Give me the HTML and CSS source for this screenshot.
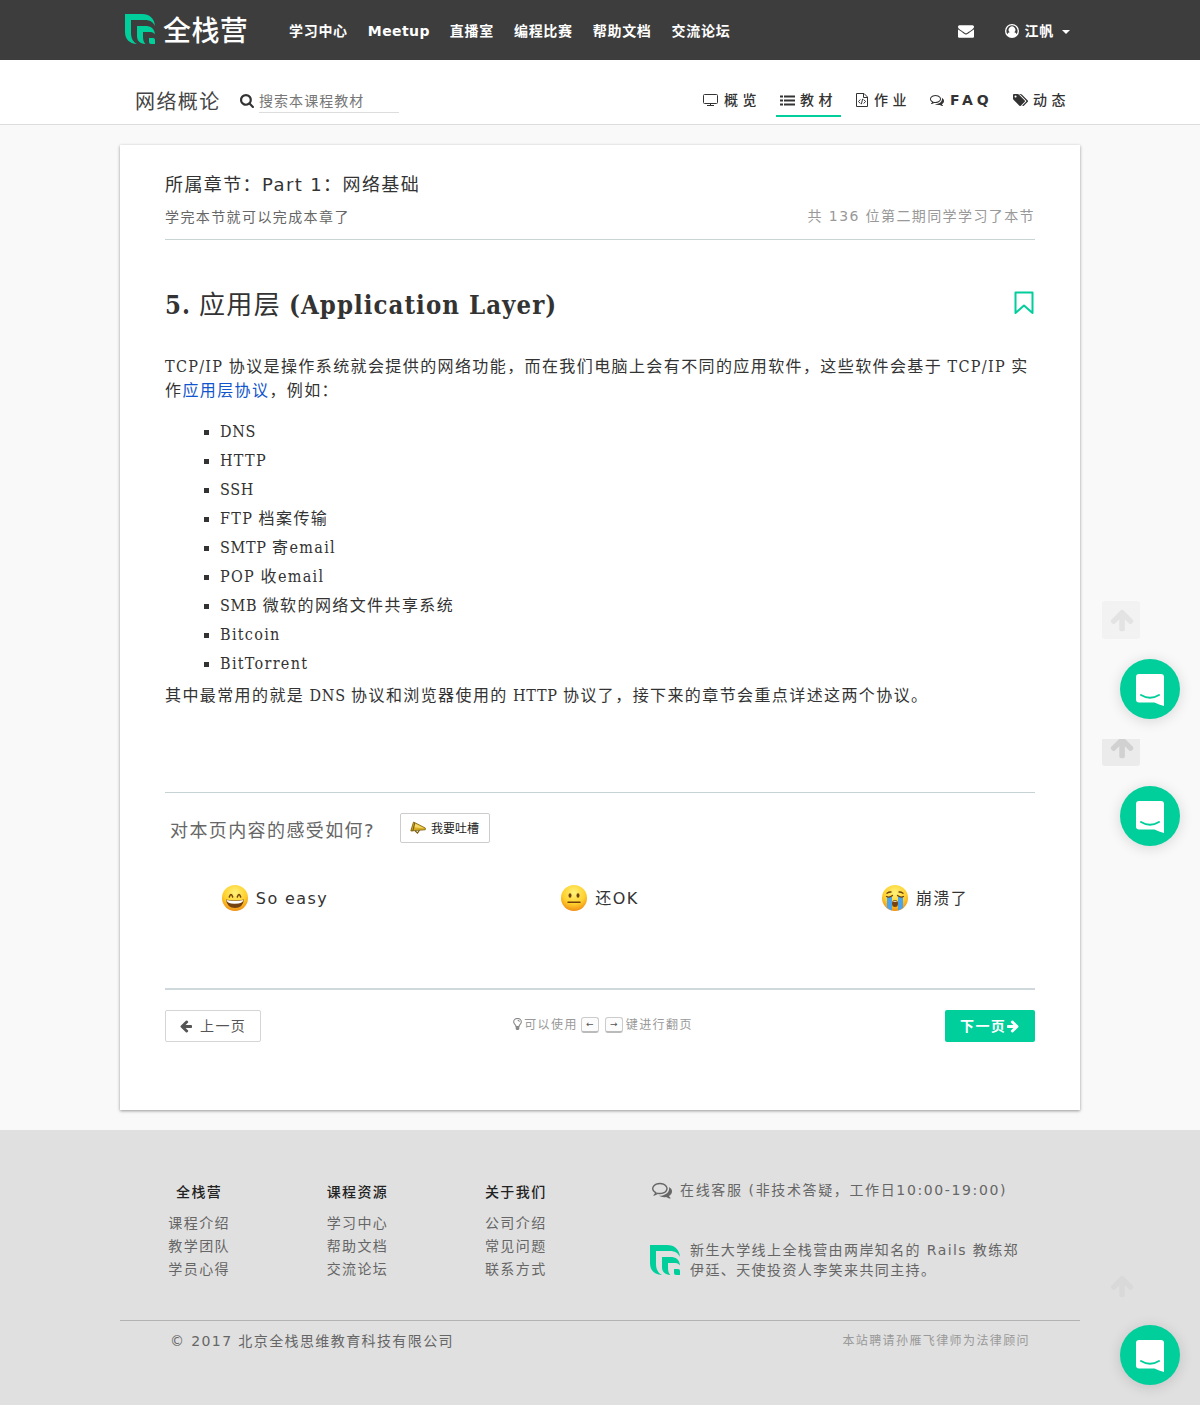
FILE: index.html
```html
<!DOCTYPE html>
<html lang="zh-CN">
<head>
<meta charset="utf-8">
<title>网络概论 - 全栈营</title>
<link rel="stylesheet" href="styles.css">
</head>
<body>
<svg class="sprite" aria-hidden="true">
  <defs>
    <radialGradient id="skin" cx="50%" cy="30%" r="72%"><stop offset="0" stop-color="#fff27a"/><stop offset=".6" stop-color="#ffd02c"/><stop offset="1" stop-color="#f08a12"/></radialGradient>
    <symbol id="logo" viewBox="0 0 30 30"><path d="M0 0H17C24.500 0 29.500 4.500 30 12C28 8 25 6 20 6H6V19C6 24 8 28 12 30C4 29.500 0 25 0 18Z"/><path d="M12 12H20C26 12 29.500 14.500 30 20.500C28.500 18.500 27 18 24 18H18V22C18 26 18.500 28 20.500 30C14.500 29.500 12 26.500 12 22Z"/><path d="M24 24H28Q30 24 30 26V30H26Q24 30 24 28Z"/></symbol>
    <symbol id="arrow" viewBox="0 0 1792 1792"><path d="M1664 896v128q0 53-32.500 90.500t-84.500 37.500h-704l293 294q38 36 38 90t-38 90l-75 76q-37 37-90 37-52 0-91-37l-651-652q-37-37-37-90 0-52 37-91l651-650q38-38 91-38 52 0 90 38l75 74q38 38 38 91t-38 91l-293 293h704q52 0 84.500 37.500t32.500 90.500z"/></symbol>
    <symbol id="comments" viewBox="0 0 1792 1792"><path d="M704 384q-153 0-286 52t-211.500 141-78.500 191q0 82 53 158t149 132l97 56-35 84q34-20 62-39l44-31 53 10q78 14 153 14 153 0 286-52t211.500-141 78.500-191-78.500-191-211.500-141-286-52zm0-128q191 0 353.500 68.500t256.500 186.500 94 257-94 257-256.500 186.500-353.500 68.500q-86 0-176-16-124 88-278 128-36 9-86 16h-3q-11 0-20.500-8t-11.500-21q-1-3-1-6.500t.5-6.500 2-6l2.500-5 3.500-5.500 4-5 4.500-5 4-4.500q5-6 23-25t26-29.500 22.500-29 25-38.500 20.500-44q-124-72-195-177t-71-224q0-139 94-257t256.500-186.500 353.500-68.500zm822 1169q10 24 20.500 44t25 38.500 22.500 29 26 29.500 23 25q1 1 4 4.500t4.500 5 4 5 3.500 5.500l2.500 5 2 6 .5 6.500-1 6.500q-3 14-13 22t-22 7q-50-7-86-16-154-40-278-128-90 16-176 16-271 0-472-132 58 4 88 4 161 0 309-45t264-129q125-92 192-212t67-254q0-77-23-152 129 71 204 178t75 230q0 120-71 224.500t-195 176.500z"/></symbol>
    <symbol id="chat" viewBox="0 0 28 32"><path fill="#fff" d="M3 0H25Q28 0 28 3V32Q23 30.500 18.500 28.500H3Q0 28.500 0 25.500V3Q0 0 3 0Z"/><path fill="none" stroke="#00ce9b" stroke-width="2" stroke-linecap="round" d="M5 21Q14 26.500 23 21"/></symbol>
  </defs>
</svg>

<header class="topbar">
  <div class="wrap topbar-row">
    <a class="brand"><svg class="brand-mark"><use href="#logo"/></svg><span>全栈营</span></a>
    <nav class="main-nav"><a>学习中心</a><a class="nav-meetup">Meetup</a><a>直播室</a><a>编程比赛</a><a>帮助文档</a><a>交流论坛</a></nav>
    <div class="account">
      <svg class="icon-mail" viewBox="0 128 1792 1536"><path d="M1792 710v794q0 66-47 113t-113 47h-1472q-66 0-113-47t-47-113v-794q44 49 101 87 362 246 497 345 57 42 92.500 65.500t94.500 48 110 24.500h2q51 0 110-24.500t94.500-48 92.500-65.500q170-123 498-345 57-39 100-87zm0-294q0 79-49 151t-122 123q-376 261-468 325-10 7-42.500 31t-54 38.500-52 32.500-57.500 27-50 9h-2q-23 0-50-9t-57.500-27-52-32.500-54-38.500-42.500-31q-91-64-262-182.500t-205-142.500q-62-42-117-115.500t-55-136.500q0-78 41.500-130t118.500-52h1472q65 0 112.500 47t47.500 113z"/></svg>
      <svg class="icon-user" viewBox="0 0 14 14"><path fill-rule="evenodd" d="M7 0A7 7 0 1 1 7 14A7 7 0 0 1 7 0ZM7 1.300A5.700 5.700 0 0 0 2.500 10.300C2.800 9 3.600 8.500 4.800 8.300A3.300 3.300 0 1 1 9.200 8.300C10.400 8.500 11.200 9 11.500 10.300A5.700 5.700 0 0 0 7 1.300Z"/></svg>
      <span>江帆</span><i class="caret"></i>
    </div>
  </div>
</header>

<div class="coursebar">
  <div class="wrap course-row">
    <h1>网络概论</h1>
    <svg class="icon-search" viewBox="64 128 1664 1664"><path d="M1216 832q0-185-131.500-316.500t-316.500-131.500-316.500 131.500-131.500 316.500 131.500 316.500 316.500 131.500 316.500-131.500 131.500-316.500zm512 832q0 52-38 90t-90 38q-54 0-90-38l-343-342q-179 124-399 124-143 0-273.500-55.500t-225-150-150-225-55.500-273.500 55.500-273.500 150-225 225-150 273.500-55.500 273.500 55.500 225 150 150 225 55.500 273.500q0 220-124 399l343 343q37 37 37 90z"/></svg>
    <div class="search-box">搜索本课程教材</div>
    <nav class="tabs">
      <a class="tab tab-overview"><svg viewBox="0 0 15 13"><path fill="none" stroke="#333" d="M1.500 .5H13.500Q14.500 .5 14.500 1.500V8.500Q14.500 9.500 13.500 9.500H1.500Q.5 9.500 .5 8.500V1.500Q.5 .5 1.500 .5ZM7.500 9.500V11.500M4 11.500H11"/></svg>概览</a>
      <a class="tab tab-lesson active"><svg viewBox="0 0 15 13"><path d="M0 1.500h3v2H0zM0 5.500h3v2H0zM0 9.500h3v2H0zM4 1.500h11v2H4zM4 5.500h11v2H4zM4 9.500h11v2H4z"/></svg>教材</a>
      <a class="tab tab-task"><svg viewBox="0 0 12 14"><path fill="none" stroke="#333" d="M.5 .5H8L11.500 4V13.500H.5ZM7.500 .5V4.500H11.500M4.300 6.500L2.500 8.500L4.300 10.500M7.700 6.500L9.500 8.500L7.700 10.500M6.600 5.800L5.400 11.200"/></svg>作业</a>
      <a class="tab tab-faq"><svg viewBox="0 0 1792 1792"><use href="#comments"/></svg>FAQ</a>
      <a class="tab tab-news"><svg viewBox="0 128 1891 1515"><path d="M448 448q0-53-37.500-90.500t-90.500-37.500-90.500 37.500-37.500 90.500 37.500 90.500 90.500 37.500 90.500-37.500 37.500-90.500zm1067 576q0 53-37 90l-491 492q-39 37-91 37-53 0-90-37l-715-716q-38-37-64.500-101t-26.500-117v-416q0-52 38-90t90-38h416q53 0 117 26.500t102 64.500l715 714q37 39 37 91zm384 0q0 53-37 90l-491 492q-39 37-91 37-36 0-59-14t-53-45l470-470q37-37 37-90 0-52-37-91l-715-714q-38-38-102-64.500t-117-26.500h224q53 0 117 26.500t102 64.500l715 714q37 39 37 91z"/></svg>动态</a>
    </nav>
  </div>
</div>

<main class="card">
  <section class="chapter">
    <h2>所属章节：Part 1：网络基础</h2>
    <div class="chapter-meta"><span>学完本节就可以完成本章了</span><span class="learners">共 136 位第二期同学学习了本节</span></div>
  </section>
  <article>
    <div class="title-row">
      <h3><b>5.</b> 应用层 <b>(Application Layer)</b></h3>
      <svg class="bookmark" viewBox="0 0 20 24"><path fill="none" stroke="#00ce9b" stroke-width="2" stroke-linejoin="round" d="M1.500 1.500H18.500V22L10 14.500L1.500 22Z"/></svg>
    </div>
    <p><span class="latin latin-wide">TCP/IP</span> 协议是操作系统就会提供的网络功能，而在我们电脑上会有不同的应用软件，这些软件会基于 <span class="latin latin-wide">TCP/IP</span> 实<br>作<a class="link">应用层协议</a>，例如：</p>
    <ul>
      <li><span class="latin">DNS</span></li>
      <li><span class="latin latin-wide">HTTP</span></li>
      <li><span class="latin">SSH</span></li>
      <li><span class="latin latin-wide">FTP</span> 档案传输</li>
      <li><span class="latin">SMTP</span> 寄<span class="latin latin-wide">email</span></li>
      <li><span class="latin latin-wide">POP</span> 收<span class="latin latin-wide">email</span></li>
      <li><span class="latin">SMB</span> 微软的网络文件共享系统</li>
      <li><span class="latin latin-wide">Bitcoin</span></li>
      <li><span class="latin latin-wide">BitTorrent</span></li>
    </ul>
    <p class="summary">其中最常用的就是 <span class="latin">DNS</span> 协议和浏览器使用的 <span class="latin">HTTP</span> 协议了，接下来的章节会重点详述这两个协议。</p>
  </article>
  <section class="feedback">
    <div class="feedback-head">
      <span>对本页内容的感受如何?</span>
      <button class="complain"><svg viewBox="0 0 16 14"><path fill="#8a6a10" d="M1 7L1.500 10.500L4 10Z"/><path fill="#d8ae22" stroke="#7d6010" stroke-width=".8" d="M3.500 1L15.300 7V8.800L.8 9.800Z"/><path fill="#f3d865" d="M4 2L14 7.200L3.500 6.300Z"/><path fill="none" stroke="#7d6010" stroke-width="1.200" d="M5 9.800L7.500 12L9.500 9.200M4.700 2L3 9.300"/></svg>我要吐槽</button>
    </div>
    <div class="moods">
      <a><svg viewBox="0 0 26 26"><circle cx="13" cy="13" r="13" fill="url(#skin)"/><path d="M7.300 12Q9 6.800 10.700 12M15.300 12Q17 6.800 18.700 12" fill="none" stroke="#70400a" stroke-width="1.500" stroke-linecap="round"/><path fill="#764211" d="M4 14.500Q13 16.500 22 14.500Q21 23 13 23T4 14.500Z"/><path fill="#fff" d="M4.500 15Q13 17 21.500 15Q21 18.500 13 18.700T4.500 15Z"/></svg>So easy</a>
      <a><svg viewBox="0 0 26 26"><circle cx="13" cy="13" r="13" fill="url(#skin)"/><ellipse cx="9" cy="10.500" rx="1.500" ry="2.200" fill="#70400a"/><ellipse cx="17" cy="10.500" rx="1.500" ry="2.200" fill="#70400a"/><path d="M7 17.200H19" stroke="#70400a" stroke-width="1.500" stroke-linecap="round"/></svg>还OK</a>
      <a><svg viewBox="0 0 26 26"><circle cx="13" cy="13" r="13" fill="url(#skin)"/><path d="M5 12H10V25.500Q7 24.500 5 22.500ZM16 12H21V22.500Q19 24.500 16 25.500Z" fill="#4ba5ed"/><path d="M4.500 11.500Q7.500 13 10.500 10.500M21.500 11.500Q18.500 13 15.500 10.500M5 8.300Q7 6.800 9 7M21 8.300Q19 6.800 17 7" fill="none" stroke="#70400a" stroke-width="1.300" stroke-linecap="round"/><ellipse cx="13" cy="18.500" rx="3" ry="3.500" fill="#764211"/><path d="M10.800 16.800Q13 14.500 15.200 16.800Z" fill="#fff"/></svg>崩溃了</a>
    </div>
  </section>
  <nav class="pager">
    <a class="prev"><svg><use href="#arrow"/></svg>上一页</a>
    <div class="hint"><svg viewBox="0 0 9 12"><path fill="none" stroke="#888" stroke-width="1.100" d="M3 8.500C3 6.500 .7 6 .7 3.900A3.800 3.400 0 0 1 8.300 3.900C8.300 6 6 6.500 6 8.500ZM4.600 2.200Q6.200 2.200 6.400 3.800"/><path fill="#888" d="M2.700 8.500H6.300V11L5.500 12H3.500L2.700 11Z"/></svg>可以使用<kbd>←</kbd><kbd>→</kbd>键进行翻页</div>
    <a class="next">下一页<svg><use href="#arrow"/></svg></a>
  </nav>
</main>

<footer>
  <div class="wrap footer-main">
    <div class="footer-links">
      <div><h4>全栈营</h4><a>课程介绍</a><a>教学团队</a><a>学员心得</a></div>
      <div><h4>课程资源</h4><a>学习中心</a><a>帮助文档</a><a>交流论坛</a></div>
      <div><h4>关于我们</h4><a>公司介绍</a><a>常见问题</a><a>联系方式</a></div>
    </div>
    <div class="footer-info">
      <div class="service"><svg><use href="#comments"/></svg>在线客服 (非技术答疑，工作日10:00-19:00)</div>
      <div class="about"><svg><use href="#logo"/></svg><div>新生大学线上全栈营由两岸知名的 Rails 教练郑<br>伊廷、天使投资人李笑来共同主持。</div></div>
    </div>
  </div>
  <div class="wrap legal"><span>© 2017 北京全栈思维教育科技有限公司</span><small>本站聘请孙雁飞律师为法律顾问</small></div>
</footer>

<a class="to-top top-first"><svg><use href="#arrow"/></svg></a>
<a class="messenger msg-first"><svg><use href="#chat"/></svg></a>
<a class="to-top top-second"><svg><use href="#arrow"/></svg></a>
<a class="messenger msg-second"><svg><use href="#chat"/></svg></a>
<a class="to-top top-third"><svg><use href="#arrow"/></svg></a>
<a class="messenger msg-third"><svg><use href="#chat"/></svg></a>
</body>
</html>
```
FILE: styles.css
```css
* { box-sizing: border-box; }
body {
  margin: 0;
  position: relative;
  background: #f9f9f9;
  color: #333;
  font: 14px/20px "DejaVu Sans", "Noto Sans CJK SC", sans-serif;
  letter-spacing: 1.4px;
}
h1, h2, h3, h4, p, ul { margin: 0; padding: 0; font-weight: 400; }
svg { display: block; flex: none; fill: currentColor; }
.sprite { position: absolute; width: 0; height: 0; }
.wrap { width: 960px; margin: 0 auto; }

/* top bar */
.topbar { height: 60px; background: #3d3d3d; color: #fff; }
.topbar-row { display: flex; align-items: center; height: 60px; }
.brand { display: flex; align-items: center; width: 159px; padding-left: 5px; font-size: 28px; line-height: 60px; font-weight: 500; letter-spacing: .4px; }
.brand span { padding-top: 4px; }
.brand-mark { width: 30px; height: 30px; margin-right: 8px; color: #00ce9b; margin-top: -2px; }
.main-nav { display: flex; font-weight: 700; letter-spacing: .7px; line-height: 62px; }
.main-nav a { padding: 0 10px; height: 60px; }
.main-nav .nav-meetup { letter-spacing: .4px; }
.account { display: flex; align-items: center; margin-left: auto; padding-right: 10px; font-weight: 700; letter-spacing: .7px; }
.account span { padding-top: 2px; }
.icon-mail { width: 16px; height: 14px; margin: 1px 31px 0 0; }
.icon-user { width: 14px; height: 14px; margin: 2px 6px 0 0; }
.caret { margin: 3px 0 0 8px; border: 4px solid transparent; border-top-color: #fff; border-bottom: 0; }

/* course bar */
.coursebar { height: 65px; background: #fff; border-bottom: 1px solid #ddd; }
.course-row { display: flex; align-items: flex-start; padding: 31px 9px 0 15px; }
.course-row h1 { width: 105px; font-size: 20px; line-height: 22px; color: #444; }
.icon-search { width: 14px; height: 14px; margin: 3px 5px 0 0; }
.search-box { width: 140px; height: 22px; border-bottom: 1px solid #ddd; color: #777; letter-spacing: 1.05px; }
.tabs { display: flex; margin-left: auto; font-weight: 500; letter-spacing: 4.500px; }
.tab { display: flex; align-items: center; height: 26px; padding-bottom: 9px; }
.tab svg { width: 15px; height: 13px; margin: 1px 6px 0 0; }
.tab-overview { width: 73px; }
.tab-lesson { width: 65px; padding-left: 4px; margin-right: 15px; }
.tab-lesson svg { margin-right: 5px; }
.tab.active { border-bottom: 2px solid #00ce9b; padding-bottom: 7px; }
.tab-task { width: 74px; }
.tab-task svg { width: 12px; height: 14px; }
.tab-faq { width: 83px; font-weight: 700; letter-spacing: 4px; }
.tab-faq svg { width: 14px; height: 14px; }
.tab-news { width: 58px; }
.tab-news svg { margin-right: 5px; height: 12px; }

/* lesson card */
.card {
  width: 960px;
  height: 965px;
  margin: 20px auto;
  padding: 28px 45px 0;
  background: #fff;
  box-shadow: 0 1px 3px rgba(0, 0, 0, .4);
}
.chapter { height: 67px; border-bottom: 1px solid #c9d4d5; }
.chapter h2 { font-size: 18px; line-height: 24px; }
.chapter-meta { display: flex; justify-content: space-between; margin-top: 10px; color: #666; }
.learners { color: #999; margin-top: -1px; }
.title-row { display: flex; justify-content: space-between; padding: 49px 0 0; height: 115px; }
.title-row h3 { font: 400 26px/32px "Liberation Serif", "Noto Sans CJK SC", serif; }
.title-row b { font-family: "DejaVu Serif Condensed", "DejaVu Serif", serif; font-stretch: condensed; font-size: 25.500px; letter-spacing: 1.050px; }
.bookmark { width: 20px; height: 24px; margin: 2px 1px 0 0; }
article p, article li { font: 16px/24px "Liberation Serif", "Noto Sans CJK SC", serif; white-space: nowrap; }
.latin { font-family: "DejaVu Serif Condensed", "DejaVu Serif", serif; font-stretch: condensed; letter-spacing: .7px; }
.latin-wide { letter-spacing: 1.300px; }
.link { color: #1155cc; }
article ul { margin: 14px 0 6px; padding-left: 55px; list-style: square; }
article li { height: 29px; padding-top: 3px; }
.summary { height: 108px; }

/* page feedback */
.feedback { height: 198px; border-top: 1px solid #c5d3d5; border-bottom: 2px solid #cfd8dc; }
.feedback-head { display: flex; align-items: flex-start; padding: 20px 0 0 5px; font-size: 18px; line-height: 36px; color: #666; }
.feedback-head span { width: 230px; }
.complain { display: flex; align-items: center; width: 90px; height: 30px; padding: 0 9px 1px; border: 1px solid #ccc; border-radius: 2px; background: #fff; color: #222; font: 12px/20px "Noto Sans CJK SC", sans-serif; white-space: nowrap; letter-spacing: 0; }
.complain svg { width: 16px; height: 14px; margin-right: 5px; }
.moods { display: grid; grid-template-columns: repeat(3, 325px); margin: 33px -52.500px 0; }
.moods a { display: flex; justify-content: center; align-items: center; font-size: 16px; line-height: 34px; }
.moods svg { width: 26px; height: 26px; margin: -2px 8px 0 0; }

/* pager */
.pager { display: flex; justify-content: space-between; padding-top: 20px; }
.pager a { display: flex; align-items: center; height: 32px; border-radius: 2px; }
.pager svg { width: 14px; height: 14px; }
.prev { width: 96px; padding-left: 13px; border: 1px solid #d5d5d5; color: #555; }
.prev svg { margin-right: 7px; }
.next { width: 90px; padding-left: 15px; background: #00ce9b; color: #fff; font-weight: 700; }
.next svg { transform: scaleX(-1); }
.hint { display: flex; align-items: center; height: 30px; font-size: 12px; color: #999; }
.pager .hint svg { width: 9px; height: 12px; margin: -2px 2px 0 0; }
kbd { width: 18px; height: 16px; margin: 0 3px; border: 1px solid #ccc; border-bottom: 2px solid #bbb; border-radius: 3px; font: 9px/13px "DejaVu Sans", sans-serif; letter-spacing: 0; text-align: center; color: #555; background: #fcfcfc; }

/* footer */
footer { height: 275px; background: #e0e0e0; color: #666; }
.footer-main { display: flex; height: 190px; padding: 49px 0 0; }
.footer-links { display: flex; width: 475px; }
.footer-links div { width: 158.300px; text-align: center; }
.footer-links h4 { margin: 3px 0 10px; font-weight: 500; color: #222; }
.footer-links a { display: block; line-height: 23px; }
.footer-info { padding: 1px 0 0 55px; white-space: nowrap; }
.service { display: flex; align-items: center; padding-left: 2px; letter-spacing: 1.630px; }
.service svg { width: 20px; height: 20px; margin-right: 8px; }
.about { display: flex; align-items: center; margin-top: 40px; letter-spacing: 1.400px; }
.about svg { width: 30px; height: 30px; margin-right: 10px; color: #00ce9b; }
.legal { display: flex; justify-content: space-between; padding: 10px 50px 0; border-top: 1px solid #b3b3b3; }
.legal small { font-size: 12px; color: #999; }

/* floating controls */
.to-top { position: absolute; left: 1102px; width: 38px; height: 38px; display: flex; align-items: center; justify-content: center; padding-left: 3px; border-radius: 3px; overflow: hidden; }
.to-top svg { width: 26px; height: 26px; transform: rotate(90deg); }
.top-first { top: 601px; background: #f2f2f2; color: #e3e3e3; }
.top-second { top: 739px; height: 27px; align-items: flex-end; padding-bottom: 6px; border-radius: 0 0 3px 3px; background: #ebebeb; color: #d1d1d1; }
.top-third { top: 1267px; color: #d9d9d9; }
.messenger { position: absolute; left: 1120px; width: 60px; height: 60px; padding: 15px 16px; border-radius: 50%; background: #00ce9b; box-shadow: 0 2px 14px rgba(0, 0, 0, .14); }
.messenger svg { width: 28px; height: 32px; }
.msg-first { top: 659px; }
.msg-second { top: 786px; }
.msg-third { top: 1325px; }
```
